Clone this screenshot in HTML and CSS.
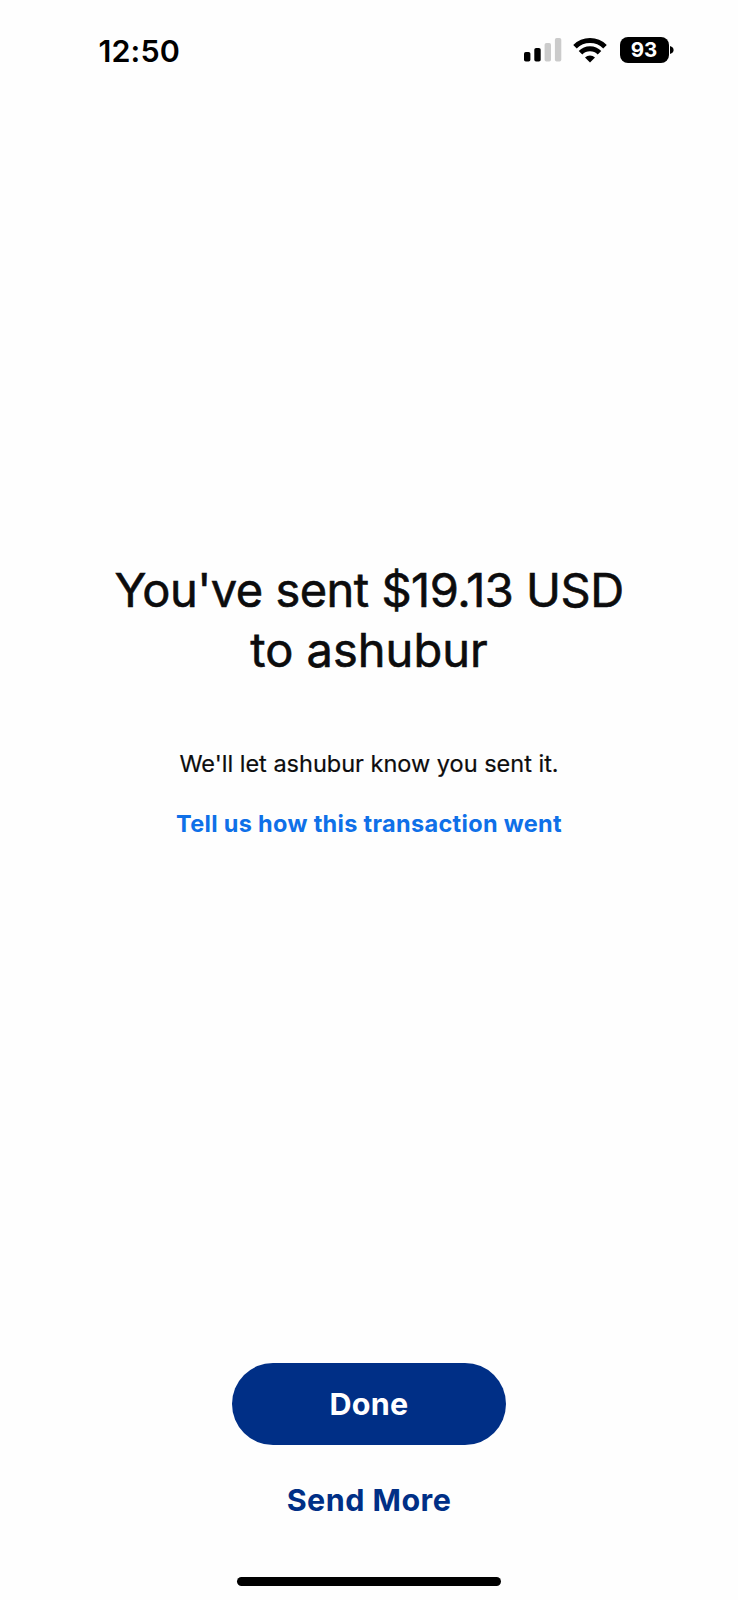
FILE: index.html
```html
<!DOCTYPE html>
<html lang="en">
<head>
<meta charset="utf-8">
<title>Payment sent</title>
<link rel="stylesheet" href="styles.css">
</head>
<body>
<div class="screen">
  <header class="status">
    <span class="time">12:50</span>
    <div class="indicators">
      <svg class="signal" width="38" height="24" viewBox="0 0 38 24">
        <rect x="0" y="14" width="6.4" height="9.6" rx="1.8" fill="#000"/>
        <rect x="10.3" y="10" width="6.4" height="13.6" rx="1.8" fill="#000"/>
        <rect x="20.6" y="5" width="6.4" height="18.6" rx="1.8" fill="#cbcbcb"/>
        <rect x="30.9" y="0" width="6.4" height="23.6" rx="1.8" fill="#cbcbcb"/>
      </svg>
      <svg class="wifi" width="34" height="25" viewBox="0 0 34 25">
        <path d="M2 8.7a21.3 21.3 0 0 1 30 0M7.5 14.7a13.4 13.4 0 0 1 19 0" fill="none" stroke="#000" stroke-width="5"/>
        <path d="M17 24.4l-5-4.9a7.4 7.4 0 0 1 10 0z" fill="#000"/>
      </svg>
      <div class="battery">
        <span class="level">93</span>
        <svg class="cap" width="4" height="8" viewBox="0 0 4 8"><path d="M0 0q3.6 1.2 3.6 4T0 8z" fill="#000"/></svg>
      </div>
    </div>
  </header>
  <main class="content">
    <h1 class="title"><span class="title-amount">You've sent $19.13 USD</span><br><span class="title-name">to ashubur</span></h1>
    <p class="note">We'll let ashubur know you sent it.</p>
    <a class="feedback">Tell us how this transaction went</a>
  </main>
  <footer class="actions">
    <button class="done">Done</button>
    <a class="more">Send More</a>
    <div class="home"></div>
  </footer>
</div>
</body>
</html>
```
FILE: styles.css
```css
body {
  margin: 0;
  background: #fefefe;
  color: #0c0c0d;
  font-family: Inter, "Liberation Sans", sans-serif;
}
.screen {
  box-sizing: border-box;
  width: 738px;
  height: 1600px;
  display: flex;
  flex-direction: column;
}
.status {
  display: flex;
  justify-content: space-between;
  align-items: center;
  height: 100px;
  padding: 0 64px 0 98.5px;
  color: #000;
}
.time {
  margin-top: 1px;
  font-size: 30.5px;
  font-weight: 600;
  letter-spacing: 0.1px;
  line-height: 36px;
}
.indicators {
  display: flex;
  align-items: center;
}
.wifi { margin: 0 12.5px 0 11.5px; }
.battery {
  display: flex;
  align-items: center;
  gap: 1.5px;
}
.level {
  width: 49px;
  height: 26px;
  border-radius: 8px;
  background: #000;
  color: #fff;
  font-size: 20.5px;
  font-weight: 700;
  line-height: 26px;
  text-align: center;
}
.content {
  flex: 1;
  display: flex;
  flex-direction: column;
  align-items: center;
  padding-top: 460px;
}
.title {
  margin: 0 0 69px;
  font-size: 47px;
  font-weight: 400;
  line-height: 60px;
  text-align: center;
  -webkit-text-stroke: 0.6px currentColor;
}
.title-amount { letter-spacing: -0.5px; }
.note {
  margin: 0 0 30px;
  font-size: 23.5px;
  line-height: 30px;
  -webkit-text-stroke: 0.2px currentColor;
}
.feedback {
  color: #0f70e8;
  font-size: 23.5px;
  font-weight: 700;
  letter-spacing: 0.32px;
  line-height: 30px;
}
.actions {
  display: flex;
  flex-direction: column;
  align-items: center;
  padding-bottom: 14px;
}
.done {
  width: 274px;
  height: 82px;
  border: 0;
  border-radius: 41px;
  background: #002f86;
  color: #fff;
  font: 700 30.5px/36px Inter, "Liberation Sans", sans-serif;
  letter-spacing: 0.3px;
}
.more {
  margin: 37px 0 59px;
  color: #002f86;
  font-size: 30.5px;
  font-weight: 700;
  letter-spacing: 0.45px;
  line-height: 36px;
}
.home {
  width: 264px;
  height: 9px;
  border-radius: 5px;
  background: #000;
}
```
